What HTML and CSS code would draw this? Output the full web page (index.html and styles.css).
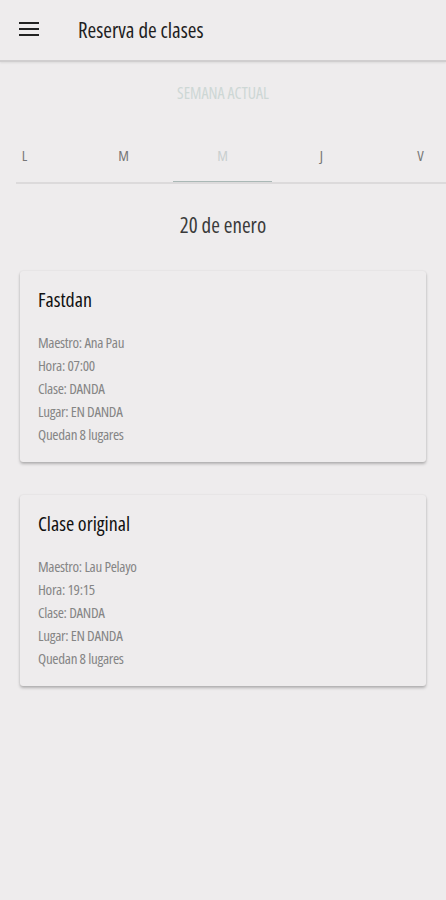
FILE: index.html
```html
<!DOCTYPE html>
<html lang="es">
<head>
    <meta charset="UTF-8">
    <meta name="viewport" content="width=device-width, initial-scale=1.0">
    <title>Reserva de clases</title>
    <link rel="stylesheet" href="styles.css">
</head>
<body>
    <header class="app-bar">
        <button class="menu-btn" aria-label="Menú">
            <svg width="20" height="14" viewBox="0 0 20 14">
                <rect x="0" y="0" width="20" height="2" fill="#222"/>
                <rect x="0" y="6" width="20" height="2" fill="#222"/>
                <rect x="0" y="12" width="20" height="2" fill="#222"/>
            </svg>
        </button>
        <h1 class="app-title">Reserva de clases</h1>
    </header>

    <div class="week-label">SEMANA ACTUAL</div>

    <nav class="tabs">
        <div class="tab-strip">
            <div class="tab">L</div>
            <div class="tab">M</div>
            <div class="tab active">M</div>
            <div class="tab">J</div>
            <div class="tab">V</div>
        </div>
    </nav>

    <div class="day-title">20 de enero</div>

    <div class="class-list">
        <div class="card">
            <h2 class="card-title">Fastdan</h2>
            <div class="card-info">
                <div>Maestro: Ana Pau</div>
                <div>Hora: 07:00</div>
                <div>Clase: DANDA</div>
                <div>Lugar: EN DANDA</div>
                <div>Quedan 8 lugares</div>
            </div>
        </div>

        <div class="card">
            <h2 class="card-title">Clase original</h2>
            <div class="card-info">
                <div>Maestro: Lau Pelayo</div>
                <div>Hora: 19:15</div>
                <div>Clase: DANDA</div>
                <div>Lugar: EN DANDA</div>
                <div>Quedan 8 lugares</div>
            </div>
        </div>
    </div>
</body>
</html>
```

FILE: styles.css
```css
body {
    font-family: "Open Sans", "DejaVu Sans Condensed", sans-serif;
    font-stretch: 75%;
    background-color: #eeeced;
    margin: 0;
    padding: 0;
    color: #222;
}
.app-bar {
    height: 60px;
    display: flex;
    align-items: center;
    border-bottom: 2px solid #d0cecf;
    box-shadow: 0 1px 2px rgba(0, 0, 0, 0.08);
}
.menu-btn {
    background: none;
    border: none;
    padding: 0;
    margin-left: 19px;
    margin-top: -2px;
    width: 20px;
    height: 14px;
    display: flex;
}
.app-title {
    margin: 0 0 0 39px;
    font-size: 21px;
    font-weight: 400;
    color: #1e1e1e;
}
.week-label {
    text-align: center;
    margin-top: 20px;
    font-size: 16px;
    color: #cdd7d5;
}
.tabs {
    margin: 37px 0 0 16px;
    overflow: hidden;
    border-bottom: 2px solid #dcdadb;
}
.tab-strip {
    display: flex;
    margin-left: -41px;
}
.tab {
    flex: 0 0 99px;
    text-align: center;
    font-size: 15px;
    color: #777;
    padding: 4px 0 16px;
    border-bottom: 3px solid transparent;
    margin-bottom: -2px;
}
.tab.active {
    color: #c9cfcf;
    border-bottom-color: #aab8b6;
}
.day-title {
    text-align: center;
    margin-top: 27px;
    font-size: 21px;
    color: #3a3a3a;
}
.class-list {
    padding: 32px 20px;
    display: flex;
    flex-direction: column;
    gap: 33px;
}
.card {
    background-color: #eeeced;
    border-radius: 3px;
    box-shadow: 0 2px 3px rgba(0, 0, 0, 0.25), 0 0 2px rgba(0, 0, 0, 0.08);
    padding: 15px 18px 16px;
    height: 160px;
}
.card-title {
    margin: 0;
    font-size: 20px;
    font-weight: 400;
    color: #111;
}
.card-info {
    margin-top: 18px;
    font-size: 15px;
    letter-spacing: -0.3px;
    line-height: 23px;
    color: #858585;
}
```
